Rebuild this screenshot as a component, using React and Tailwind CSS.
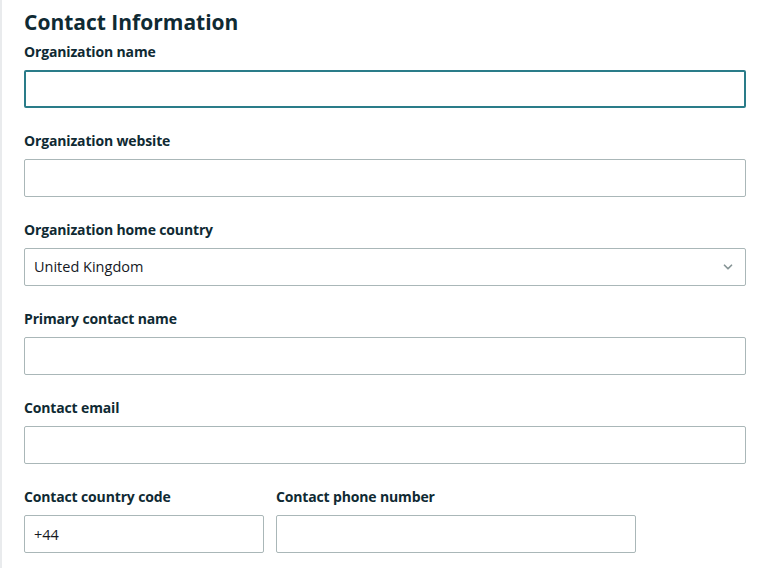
import { ChevronDown } from 'lucide-react'

const font = { fontFamily: '"Open Sans", "Noto Sans", sans-serif' }

function Field({ label, children, className = '' }) {
  return (
    <div className={`flex flex-col ${className}`}>
      <label className="text-[14px] font-bold leading-[20px] tracking-[-0.15px] text-[#0f2a33]">{label}</label>
      <div className="mt-2">{children}</div>
    </div>
  )
}

function TextInput({ value = '', focused = false }) {
  return (
    <input
      readOnly
      value={value}
      className={[
        'block h-[38px] w-full rounded-[2px] bg-white px-[9px] text-[14.5px] text-[#16191f] outline-none',
        focused ? 'border-2 border-[#2a7c89]' : 'border border-[#aab7b8]',
      ].join(' ')}
    />
  )
}

export default function App() {
  return (
    <div className="min-h-screen border-l-2 border-[#e9ebed] bg-white text-[#0f2a33]" style={font}>
      <div className="flex flex-col pl-[22px] pr-[22px] pt-[8px]">
        <h1 className="text-[21px] font-bold leading-[28px] text-[#0f2a33]">Contact Information</h1>

        <div className="mt-[6px] flex flex-col gap-[23px]">
          <Field label="Organization name">
            <TextInput focused />
          </Field>
          <Field label="Organization website">
            <TextInput />
          </Field>
          <Field label="Organization home country">
            <div className="flex h-[38px] w-full items-center justify-between rounded-[2px] border border-[#aab7b8] bg-white pl-[9px] pr-[10px]">
              <span className="text-[14.5px] text-[#16191f]">United Kingdom</span>
              <ChevronDown size={14} strokeWidth={3} className="text-[#879596]" />
            </div>
          </Field>
          <Field label="Primary contact name">
            <TextInput />
          </Field>
          <Field label="Contact email">
            <TextInput />
          </Field>
          <div className="flex gap-3">
            <Field label="Contact country code" className="w-[240px]">
              <TextInput value="+44" />
            </Field>
            <Field label="Contact phone number" className="w-[360px]">
              <TextInput />
            </Field>
          </div>
        </div>
      </div>
    </div>
  )
}
